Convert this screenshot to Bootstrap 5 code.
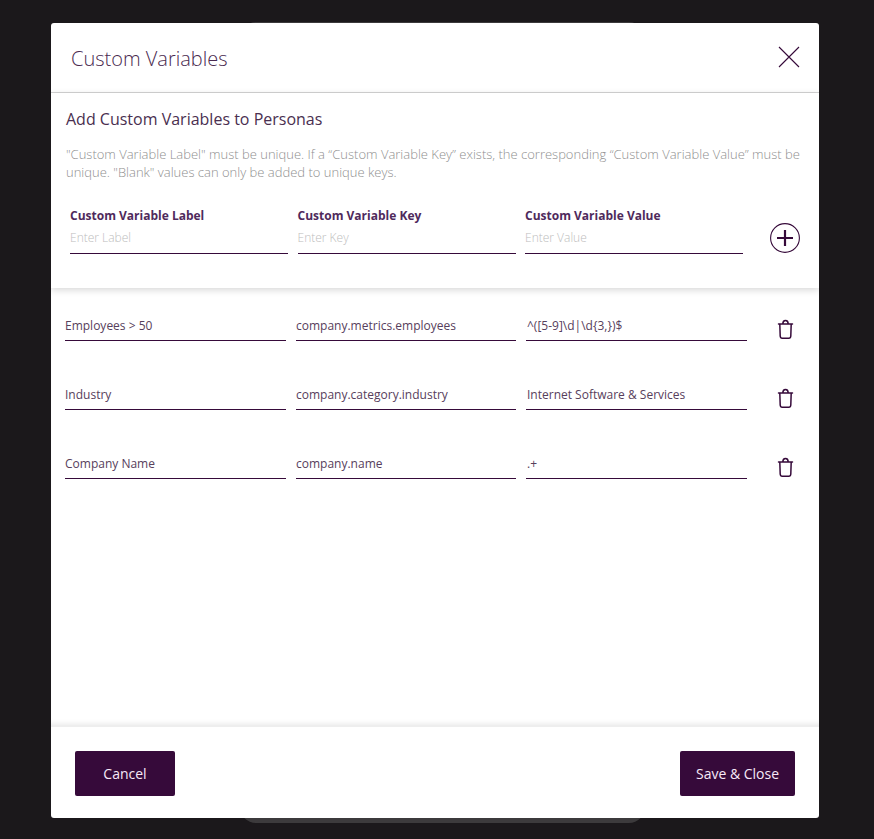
<!DOCTYPE html>
<html lang="en">
<head>
  <meta charset="UTF-8">
  <title>Custom Variables</title>
  <meta name="viewport" content="width=device-width, initial-scale=1">
  <link href="https://cdn.jsdelivr.net/npm/bootstrap@5.3.0/dist/css/bootstrap.min.css" rel="stylesheet">
  <style>
    body { background: #1b181b; height: 839px; overflow: hidden; font-family: "Open Sans", sans-serif; color: #360a3a; }
    .page-under { position: absolute; left: 240px; width: 405px; top: 22px; height: 801px; background: #3c3a3c; border-radius: 16px; }
    .vars-dialog { position: relative; width: 768px; height: 795px; margin: 23px 0 0 51px; background: #fff; border-radius: 3px; overflow: hidden; }
    .vars-head { height: 70px; padding: 0 19px 0 20px; border-bottom: 1px solid #d4d4d4; }
    .vars-title { font-size: 20px; font-weight: 300; color: #4a2a50; margin: 2px 0 0; line-height: 30px; }
    .close-btn { width: 22px; height: 22px; padding: 0; margin-top: -2px; background: none; border: 0; display: flex; }
    .vars-add { position: relative; height: 195px; padding: 15px 15px 0; box-shadow: 0 2px 7px rgba(0,0,0,.16); }
    .vars-sub { font-size: 16px; line-height: 22px; font-weight: 400; color: #4a2f50; margin: 0 0 16px; }
    .vars-help { font-size: 13px; line-height: 17.5px; font-weight: 300; color: #8f8f8f; margin: 0 0 27px; }
    .add-field { width: 218px; }
    .add-label { display: block; font-size: 12px; line-height: 16px; font-weight: 700; color: #4f2a5c; margin: 0 0 4px; }
    .line-input { display: block; width: 100%; border: 0; border-bottom: 1px solid #360a3a; border-radius: 0; padding: 0; outline: 0; font-family: inherit; font-size: 12px; background: none; }
    .add-field .line-input { height: 26px; padding-bottom: 6px; }
    .line-input::placeholder { color: #bdbdbd; font-weight: 300; opacity: 1; }
    .add-row { padding-left: 4px; gap: 9.5px; }
    .add-btn { width: 30px; height: 30px; padding: 0; margin-left: 17.5px; margin-top: 15px; background: none; border: 0; display: flex; }
    .vars-list { height: 438px; padding: 22px 14px 0; box-shadow: inset 0 -6px 6px -5px rgba(0,0,0,.12); }
    .var-row { height: 69px; }
    .var-fields { gap: 10px; }
    .var-fields .line-input { width: 221px; height: 31px; color: #57405c; }
    .var-fields .line-input:nth-child(2) { width: 220px; }
    .var-fields .line-input:nth-child(3) { padding-left: 1px; }
    .trash-btn { width: 18px; height: 22px; padding: 0; margin: 8px 0 0 29px; background: none; border: 0; display: flex; }
    .vars-foot { height: 91px; padding: 24px; border-top: 1px solid #eee; }
    .btn-plum { background: #360a3a; color: #f7e9f7; border: 0; border-radius: 2px; height: 45px; font-size: 14px; font-weight: 500; }
    .btn-plum:hover { background: #360a3a; color: #f7e9f7; }
    .btn-cancel { width: 100px; }
    .btn-save { width: 115px; }
  </style>
</head>
<body>
  <!-- page behind the modal -->
  <div class="page-under"></div>

  <div class="vars-dialog">
    <div class="vars-head d-flex justify-content-between align-items-center">
      <h5 class="vars-title">Custom Variables</h5>
      <button type="button" class="close-btn" aria-label="Close">
        <svg width="22" height="22" viewBox="0 0 22 22"><path d="M1 1L21 21M21 1L1 21" stroke="#360a3a" stroke-width="1.1" fill="none"/></svg>
      </button>
    </div>

    <div class="vars-add">
      <h6 class="vars-sub">Add Custom Variables to Personas</h6>
      <p class="vars-help">"Custom Variable Label" must be unique. If a “Custom Variable Key” exists, the corresponding “Custom Variable Value” must be unique. "Blank" values can only be added to unique keys.</p>
      <div class="d-flex add-row">
        <div class="add-field">
          <label class="add-label">Custom Variable Label</label>
          <input class="line-input" type="text" placeholder="Enter Label">
        </div>
        <div class="add-field">
          <label class="add-label">Custom Variable Key</label>
          <input class="line-input" type="text" placeholder="Enter Key">
        </div>
        <div class="add-field">
          <label class="add-label">Custom Variable Value</label>
          <input class="line-input" type="text" placeholder="Enter Value">
        </div>
        <button type="button" class="add-btn" aria-label="Add">
          <svg width="30" height="30" viewBox="0 0 30 30"><circle cx="15" cy="15" r="14.400" stroke="#360a3a" stroke-width="1.100" fill="none"/><path d="M15 7V23M7 15H23" stroke="#360a3a" stroke-width="2.200" fill="none"/></svg>
        </button>
      </div>
    </div>

    <div class="vars-list" id="var-list"></div>

    <div class="vars-foot d-flex justify-content-between">
      <button type="button" class="btn btn-plum btn-cancel">Cancel</button>
      <button type="button" class="btn btn-plum btn-save">Save &amp; Close</button>
    </div>
  </div>

  <script>
    const vars = [
      ["Employees > 50", "company.metrics.employees", "^([5-9]\\d|\\d{3,})$"],
      ["Industry", "company.category.industry", "Internet Software & Services"],
      ["Company Name", "company.name", ".+"]
    ];
    const list = document.getElementById('var-list');
    vars.forEach(v => {
      const row = document.createElement('div');
      row.className = 'var-row d-flex';
      const fields = document.createElement('div');
      fields.className = 'var-fields d-flex align-items-start';
      v.forEach(val => {
        const input = document.createElement('input');
        input.className = 'line-input';
        input.type = 'text';
        input.value = val;
        fields.appendChild(input);
      });
      row.appendChild(fields);
      const btn = document.createElement('button');
      btn.type = 'button';
      btn.className = 'trash-btn';
      btn.setAttribute('aria-label', 'Delete');
      btn.innerHTML = '<svg width="18" height="22" viewBox="0 0 18 22"><path d="M2.500 6H16.500M3.800 6L4.200 18C4.300 19.500 5 20.200 6.200 20.200H12.800C14 20.200 14.700 19.500 14.800 18L15.200 6M6.800 6C6.800 3.800 7.800 2.500 9.500 2.500C11.200 2.500 12.200 3.800 12.200 6" stroke="#360a3a" stroke-width="1.500" fill="none" stroke-linecap="round"/></svg>';
      row.appendChild(btn);
      list.appendChild(row);
    });
  </script>
  <script src="https://cdn.jsdelivr.net/npm/bootstrap@5.3.0/dist/js/bootstrap.bundle.min.js"></script>
</body>
</html>
